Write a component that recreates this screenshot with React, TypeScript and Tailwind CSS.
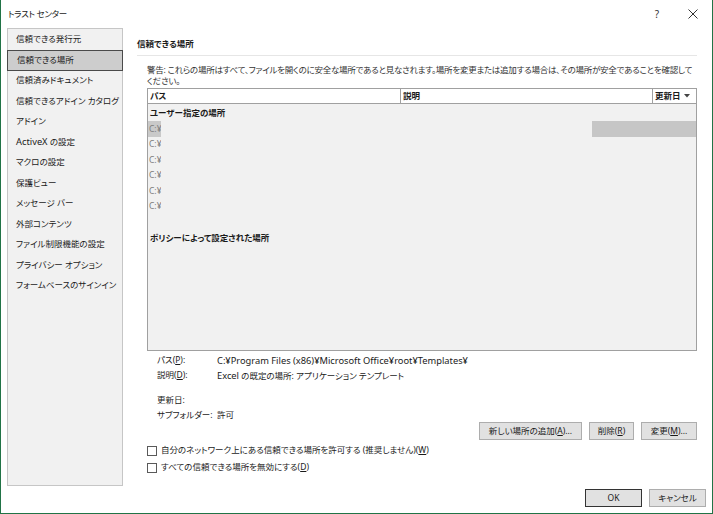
import React from "react";

const font = "[font-family:'Noto_Sans','Noto_Sans_CJK_JP',sans-serif] [font-feature-settings:'palt']";

function L({ children }: { children: React.ReactNode }) {
  return <span className="text-[9.3px]">{children}</span>;
}

const menu: React.ReactNode[] = [
  "信頼できる発行元",
  "信頼できる場所",
  "信頼済みドキュメント",
  "信頼できるアドイン カタログ",
  "アドイン",
  <>
    <L>ActiveX</L> の設定
  </>,
  "マクロの設定",
  "保護ビュー",
  "メッセージ バー",
  "外部コンテンツ",
  "ファイル制限機能の設定",
  "プライバシー オプション",
  "フォームベースのサインイン",
];

function Cbox({ label, k }: { label: string; k: string }) {
  return (
    <div className="flex items-center h-[17px]">
      <div className="w-[10px] h-[10px] border border-[#5a5a5a] bg-white" />
      <span className="ml-[4px]">
        {label}(<span className="underline">{k}</span>)
      </span>
    </div>
  );
}

function Btn({ label, k, dots, w }: { label: string; k: string; dots?: boolean; w: string }) {
  return (
    <div className={`h-[18px] ${w} border border-[#adadad] bg-[#e1e1e1] flex items-center justify-center`}>
      {label}(<span className="underline">{k}</span>){dots ? "..." : ""}
    </div>
  );
}

export default function App() {
  const rows = [0, 1, 2, 3, 4, 5];
  return (
    <div className={`w-[713px] h-[514px] bg-white border-l border-r border-b border-[#217346] text-[8.5px] text-[#1a1a1a] flex flex-col ${font}`}>
      {/* title */}
      <div className="h-[28px] flex items-center pl-[7px] pr-[12px]">
        <span className="text-[8.5px] tracking-[-0.3px]">トラスト センター</span>
        <div className="flex-1" />
        <span className="text-[10px] text-[#333] mr-[29px]">?</span>
        <svg width="10" height="10" viewBox="0 0 10 10" className="mr-[2px]">
          <path d="M0.5 0.5 L9.5 9.5 M9.5 0.5 L0.5 9.5" stroke="#333" strokeWidth="1" />
        </svg>
      </div>
      {/* body */}
      <div className="h-[458px] flex">
        <div className="ml-[6px] w-[116px] h-full bg-[#f1f1f1] border border-[#c6c6c6] pt-[0.5px]">
          {menu.map((m, i) => (
            <div
              key={i}
              className={`h-[20.5px] flex items-center pl-[8px] ${i === 1 ? "bg-[#cdcdcd] border border-[#4a4a4a] -mx-[1px] pl-[9px]" : ""}`}
            >
              <span>{m}</span>
            </div>
          ))}
        </div>
        <div className="flex-1 pl-[14px] pr-[15px] flex flex-col">
          <div className="mt-[9px] h-[14px] flex items-center font-bold text-[8.5px]">信頼できる場所</div>
          <div className="mt-[4px] h-px bg-[#e6e6e6]" />
          <div className="mt-[8px] pl-[10px] leading-[11px] text-[#333] tracking-[-0.25px]">
            警告: これらの場所はすべて、ファイルを開くのに安全な場所であると見なされます。場所を変更または追加する場合は、その場所が安全であることを確認してください。
          </div>
          {/* table */}
          <div className="mt-[2px] ml-[10px] h-[263px] border border-[#a0a0a0] bg-[#f1f1f1] flex flex-col">
            <div className="h-[15px] bg-white border-b border-[#a0a0a0] flex font-bold shrink-0">
              <div className="w-[253px] border-r border-[#a0a0a0] pl-[2px] flex items-center">パス</div>
              <div className="w-[252px] border-r border-[#a0a0a0] pl-[2px] flex items-center">説明</div>
              <div className="flex-1 pl-[2px] flex items-center">
                更新日
                <svg width="6" height="4" viewBox="0 0 6 4" className="ml-[3px]">
                  <path d="M0 0 L6 0 L3 3.5 Z" fill="#444" />
                </svg>
              </div>
            </div>
            <div className="mt-[1.5px] h-[15.6px] flex items-center pl-[2px] font-bold">ユーザー指定の場所</div>
            {rows.map((r) => (
              <div key={r} className="h-[15.6px] flex items-center">
                <div
                  className={`w-[13px] h-full overflow-hidden whitespace-nowrap flex items-center pl-[1px] text-[#7d7d7d] ${r === 0 ? "bg-[#c9c9c9]" : ""}`}
                >
                  C:¥
                </div>
                <div className="flex-1" />
                {r === 0 && <div className="w-[104px] h-full bg-[#c6c6c6]" />}
              </div>
            ))}
            <div className="h-[15.6px]" />
            <div className="h-[15.6px] flex items-center pl-[2px] font-bold">ポリシーによって設定された場所</div>
          </div>
          {/* details */}
          <div className="mt-[2px] ml-[20px] flex flex-col">
            <div className="h-[15px] flex items-center">
              <span className="w-[60px]">
                パス(<span className="underline">P</span>):
              </span>
              <L>C:¥Program Files (x86)¥Microsoft Office¥root¥Templates¥</L>
            </div>
            <div className="h-[15px] flex items-center">
              <span className="w-[60px]">
                説明(<span className="underline">D</span>):
              </span>
              <span>
                <L>Excel</L> の既定の場所: アプリケーション テンプレート
              </span>
            </div>
            <div className="h-[10px]" />
            <div className="h-[15px] flex items-center">
              <span className="w-[60px]">更新日:</span>
            </div>
            <div className="h-[15px] flex items-center">
              <span className="w-[60px]">サブフォルダー:</span>
              <span>許可</span>
            </div>
          </div>
          <div className="-mt-[1px] flex justify-end gap-[7px]">
            <Btn label="新しい場所の追加" k="A" dots w="w-[103px]" />
            <Btn label="削除" k="R" w="w-[45px]" />
            <Btn label="変更" k="M" dots w="w-[56px]" />
          </div>
          <div className="mt-[2px] ml-[10px] flex flex-col">
            <Cbox label="自分のネットワーク上にある信頼できる場所を許可する (推奨しません)" k="W" />
            <Cbox label="すべての信頼できる場所を無効にする" k="D" />
          </div>
        </div>
      </div>
      <div className="flex justify-end gap-[7px] pr-[6px] mt-[3px]">
        <div className="w-[57px] h-[18px] border border-[#333] bg-[#e1e1e1] flex items-center justify-center">OK</div>
        <div className="w-[57px] h-[18px] border border-[#adadad] bg-[#e1e1e1] flex items-center justify-center">キャンセル</div>
      </div>
    </div>
  );
}
